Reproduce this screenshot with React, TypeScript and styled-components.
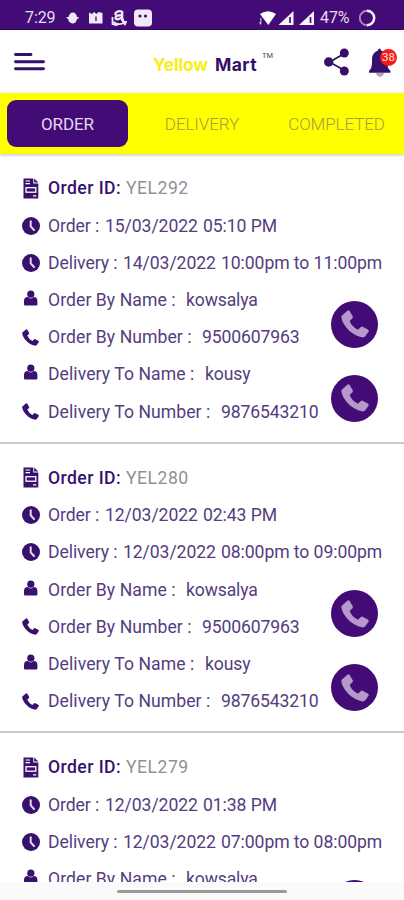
import React from "react";
import styled, { createGlobalStyle } from "styled-components";

const purple = "#430b76";
const ink = "#38106e";

const Global = createGlobalStyle`
  * { box-sizing: border-box; }
  html, body { margin: 0; padding: 0; background: #fff; }
  body { font-family: Roboto, "Liberation Sans", sans-serif; color: ${ink}; }
`;

const Screen = styled.div`
  width: 404px;
  height: 900px;
  display: flex;
  flex-direction: column;
  overflow: hidden;
  background: #fff;
`;

const StatusBar = styled.header`
  flex: none;
  height: 30px;
  padding: 6px 28px 0 25px;
  display: flex;
  align-items: center;
  justify-content: space-between;
  background: ${purple};
  border-bottom: 1px solid #2d0b62;
`;

const StatusText = styled.span<{ $w: number }>`
  width: ${(p) => p.$w}px;
  font-size: 16px;
  line-height: 20px;
  letter-spacing: -0.1px;
  color: #e9def2;
  white-space: nowrap;
`;

const StatusGroup = styled.div<{ $gap: number }>`
  display: flex;
  align-items: center;
  gap: ${(p) => p.$gap}px;
  svg { display: block; }
`;

const AppBar = styled.div`
  flex: none;
  height: 63px;
  display: grid;
  grid-template-columns: 153px 171px 27px 1fr;
  align-items: center;
  svg { display: block; }
`;

const MenuButton = styled.div`
  padding-left: 14px;
`;

const Brand = styled.div`
  display: flex;
  align-items: flex-start;
  height: 26px;
  margin-top: 4px;
  font-family: Inter, sans-serif;
  font-weight: 700;
  font-size: 17.5px;
  line-height: 27px;
  white-space: nowrap;
`;

const BrandPart = styled.span<{ $color: string; $w: number; $ls: number }>`
  width: ${(p) => p.$w}px;
  color: ${(p) => p.$color};
  letter-spacing: ${(p) => p.$ls}px;
`;

const Trademark = styled.sup`
  font: 400 7.5px/10px Roboto, sans-serif;
  color: #4d3c69;
`;

const BellWrap = styled.div`
  position: relative;
  width: 32px;
  height: 32px;
  margin-left: 14px;
`;

const Badge = styled.span`
  position: absolute;
  left: 15px;
  top: 3px;
  width: 17px;
  height: 17px;
  border-radius: 50%;
  background: #f51b17;
  color: #ffe3e3;
  font-size: 11.5px;
  line-height: 17px;
  text-align: center;
`;

const Tabs = styled.nav`
  flex: none;
  height: 61px;
  display: grid;
  grid-template-columns: 135px 134px 135px;
  align-items: center;
  background: #ffff00;
  box-shadow: 0 1px 3px rgba(70, 70, 90, 0.35);
`;

const Tab = styled.div<{ $active?: boolean }>`
  height: 47px;
  margin: -1px 7px 0;
  border-radius: 9px;
  display: flex;
  align-items: center;
  justify-content: center;
  padding-top: 2px;
  font-size: 17px;
  letter-spacing: -0.1px;
  white-space: nowrap;
  font-weight: ${(p) => (p.$active ? 400 : 300)};
  background: ${(p) => (p.$active ? purple : "transparent")};
  color: ${(p) => (p.$active ? "#e5d8ee" : "#a89a48")};
`;

const List = styled.main`
  flex: 1;
  min-height: 0;
  overflow: hidden;
`;

const Card = styled.section`
  height: 289.6px;
  padding: 15px 0 0 22px;
  border-bottom: 2px solid #c9c9cb;
`;

const Row = styled.div<{ $head?: boolean }>`
  height: ${(p) => (p.$head ? 38 : 37.2)}px;
  display: flex;
  align-items: center;
  font-size: 17.6px;
  line-height: 22px;
  white-space: pre;
`;

const IconSlot = styled.span`
  width: 26px;
  flex: none;
  display: flex;
  svg { display: block; }
`;

const Cell = styled.span<{ $w?: number; $bold?: boolean; $muted?: boolean; $ls?: number }>`
  flex: none;
  width: ${(p) => (p.$w ? p.$w + "px" : "auto")};
  font-weight: ${(p) => (p.$bold ? 500 : 400)};
  letter-spacing: ${(p) => p.$ls ?? -0.08}px;
  color: ${(p) => (p.$muted ? "#929096" : p.$bold ? ink : "#543d7e")};
`;

const Contacts = styled.div`
  display: flex;
`;

const ContactRows = styled.div`
  width: 309px;
`;

const Calls = styled.div`
  display: flex;
  flex-direction: column;
  gap: 27px;
  padding-top: 19.4px;
`;

const CallButton = styled.div`
  width: 47px;
  height: 47px;
  border-radius: 50%;
  background: ${purple};
  display: flex;
  align-items: center;
  justify-content: center;
`;

const NavBar = styled.footer`
  flex: none;
  height: 18px;
  display: flex;
  justify-content: center;
  background: #fafafa;
  padding-top: 8px;
`;

const Handle = styled.div`
  width: 170px;
  height: 3px;
  border-radius: 2px;
  background: #999;
`;

const ClockIcon = () => (
  <svg width="18" height="18" viewBox="0 0 18 18">
    <circle cx="9" cy="9" r="9" fill={ink} />
    <path d="M8.7 4.2V9.4L12 13" fill="none" stroke="#e3dced" strokeWidth="2" strokeLinecap="round" />
  </svg>
);

const PersonIcon = () => (
  <svg width="18" height="20" viewBox="0 0 18 20">
    <circle cx="8.8" cy="4.2" r="3.6" fill={ink} />
    <path d="M2 14.5V11Q2 7.2 5.8 7.1Q8.8 10 11.8 7.1Q15.4 7.2 15.4 11V14.5Q15.4 15.6 14.3 15.6H3.2Q2 15.6 2 14.5Z" fill={ink} />
  </svg>
);

const HandsetIcon = ({ size, color }: { size: number; color: string }) => (
  <svg width={size} height={size} viewBox="0 0 28 28">
    <path
      d="M1 5.5L6.4.7Q7.7-.2 8.8 1.3L11.6 6Q12.4 7.4 11.2 8.5L8.7 10.9Q10.8 16.6 17 19.7L19.6 17.2Q20.7 16.2 22.1 16.9L26.8 19.4Q28.3 20.3 27.5 21.7L24.3 26.3Q23.2 27.8 20.8 27.3C11 25.2 2 16 .4 7.7Q.1 6.3 1 5.5Z"
      fill={color}
    />
  </svg>
);

const ReceiptIcon = () => (
  <svg width="18" height="21" viewBox="0 0 18 21">
    <path d="M1.5.5H11.3V5.5H16.3V20.5H1.5Z" fill={ink} />
    <path d="M12.2.5L16.3 4.6H12.2Z" fill={ink} />
    <path d="M3.5 3H8M3.5 5.6H8M11 17.8H14.3" stroke="#fff" strokeWidth="1.2" />
    <rect x="4" y="9.7" width="9.8" height="4.5" fill={ink} stroke="#fff" strokeWidth="1.3" />
  </svg>
);

const LeftStatusIcons = () => (
  <svg width="88" height="20" viewBox="0 0 88 20" fill="#f1e9f7">
    <path d="M1 9H3.5Q4.5 4.5 8 4.5Q11 4.5 12 9L14 9.6V10.3L12 11Q11 15.5 7.5 15.5Q4 15 3 11Z" />
    <path d="M24 4.5L27 6L29 4L31.5 6L33.5 4L37.5 5V15.5H24Z" />
    <path d="M31 8.5V13" stroke={purple} strokeWidth="1.3" />
    <path d="M50.5 7.2V5Q54 1.8 57.2 4V11.8H59M57 7.3Q50.5 6.8 50.5 10Q51.5 12.8 57 9.6" fill="none" stroke="#f1e9f7" strokeWidth="2.3" />
    <path d="M47.5 9V16L52.5 17.5M48.5 14Q53.5 18 60 14.5M57 13.5L61 14L59.5 17.3" fill="none" stroke="#f1e9f7" strokeWidth="1.8" />
    <rect x="69" y="1.5" width="18" height="17" rx="4" />
    <circle cx="75" cy="8" r="1.6" fill={purple} />
    <circle cx="80.5" cy="8" r="1.6" fill={purple} />
  </svg>
);

const SignalIcons = () => (
  <svg width="56" height="18" viewBox="0 0 56 18">
    <path d="M1 5Q9-.5 17 5L9.3 16Z" fill="#fff" />
    <path d="M1.8 9V15M.5 13.5L1.8 15.5" fill="none" stroke="#c9b8d9" strokeWidth="1.2" />
    <path d="M34.5 2V16H19.5ZM55 2V16H40Z" fill="#f6f1fa" />
    <path d="M31 8V14M51.5 8V14" stroke={purple} strokeWidth="1.7" />
  </svg>
);

const BatteryRing = () => (
  <svg width="18" height="18" viewBox="0 0 18 18" fill="none">
    <circle cx="9" cy="9" r="7.2" stroke="#a38abb" strokeWidth="2" />
    <path d="M9 1.8A7.2 7.2 0 0 1 9 16.2" stroke="#f5eff9" strokeWidth="2.5" />
  </svg>
);

const MenuIcon = () => (
  <svg width="31" height="20" viewBox="0 0 31 20">
    <path d="M1.5 2.5H17M1.5 9.7H29.5M1.5 16.7H29.5" stroke="#35106b" strokeWidth="2.9" strokeLinecap="round" />
  </svg>
);

const ShareIcon = () => (
  <svg width="27" height="28" viewBox="0 0 27 28">
    <path d="M21.5 5L5.5 14L21.5 23" fill="none" stroke="#35106b" strokeWidth="1.8" />
    <circle cx="20.3" cy="5" r="4.5" fill="#35106b" />
    <circle cx="4.7" cy="14" r="4.7" fill="#35106b" />
    <circle cx="20.3" cy="23" r="4.5" fill="#35106b" />
  </svg>
);

const BellIcon = () => (
  <svg width="32" height="32" viewBox="0 0 32 32">
    <path d="M11 27H19Q18.3 30.7 15 30.7Q11.7 30.7 11 27Z" fill="#b1a5bd" />
    <path d="M13 4.5Q13 2.5 14.5 2.5Q16 2.5 16 4.5Q22 6.5 22.5 13V20Q23 22.5 25.5 25V26.8H4V25Q7 22 7 18V12.5Q7.5 6.5 13 4.5Z" fill="#35106b" />
  </svg>
);

type Order = { id: string; placed: string; placedAt: string; due: string; slot: string };

const orders: Order[] = [
  { id: "YEL292", placed: "15/03/2022", placedAt: "05:10 PM", due: "14/03/2022", slot: "10:00pm to 11:00pm" },
  { id: "YEL280", placed: "12/03/2022", placedAt: "02:43 PM", due: "12/03/2022", slot: "08:00pm to 09:00pm" },
  { id: "YEL279", placed: "12/03/2022", placedAt: "01:38 PM", due: "12/03/2022", slot: "07:00pm to 08:00pm" },
];

type ContactProps = { label: string; value: string; width: number; phone?: boolean };

const ContactRow = ({ label, value, width, phone }: ContactProps) => (
  <Row>
    <IconSlot>{phone ? <HandsetIcon size={17} color={ink} /> : <PersonIcon />}</IconSlot>
    <Cell $w={width} $ls={0.06}>{label} :</Cell>
    <Cell $ls={-0.15}>{value}</Cell>
  </Row>
);

const OrderCard = ({ order }: { order: Order }) => (
  <Card>
    <Row $head>
      <IconSlot><ReceiptIcon /></IconSlot>
      <Cell $bold $w={78} $ls={0.42}>Order ID:</Cell>
      <Cell $muted $ls={0.5}>{order.id}</Cell>
    </Row>
    <Row>
      <IconSlot><ClockIcon /></IconSlot>
      <Cell $w={57}>Order :</Cell>
      <Cell $w={98}>{order.placed}</Cell>
      <Cell>{order.placedAt}</Cell>
    </Row>
    <Row>
      <IconSlot><ClockIcon /></IconSlot>
      <Cell $w={75}>Delivery :</Cell>
      <Cell $w={98}>{order.due}</Cell>
      <Cell>{order.slot}</Cell>
    </Row>
    <Contacts>
      <ContactRows>
        <ContactRow label="Order By Name" value="kowsalya" width={138} />
        <ContactRow label="Order By Number" value="9500607963" width={154} phone />
        <ContactRow label="Delivery To Name" value="kousy" width={157} />
        <ContactRow label="Delivery To Number" value="9876543210" width={173} phone />
      </ContactRows>
      <Calls>
        <CallButton><HandsetIcon size={28} color="#b698cc" /></CallButton>
        <CallButton><HandsetIcon size={28} color="#b698cc" /></CallButton>
      </Calls>
    </Contacts>
  </Card>
);

export default function App() {
  return (
    <>
      <Global />
      <Screen>
        <StatusBar>
          <StatusGroup $gap={9}>
            <StatusText $w={31}>7:29</StatusText>
            <LeftStatusIcons />
          </StatusGroup>
          <StatusGroup $gap={5}>
            <SignalIcons />
            <StatusText $w={33}>47%</StatusText>
            <BatteryRing />
          </StatusGroup>
        </StatusBar>
        <AppBar>
          <MenuButton><MenuIcon /></MenuButton>
          <Brand>
            <BrandPart $color="#f8ee1c" $w={62} $ls={-0.2}>Yellow</BrandPart>
            <BrandPart $color="#35106b" $w={47} $ls={0.4}>Mart</BrandPart>
            <Trademark>TM</Trademark>
          </Brand>
          <ShareIcon />
          <BellWrap>
            <BellIcon />
            <Badge>38</Badge>
          </BellWrap>
        </AppBar>
        <Tabs>
          <Tab $active>ORDER</Tab>
          <Tab>DELIVERY</Tab>
          <Tab>COMPLETED</Tab>
        </Tabs>
        <List>
          {orders.map((order) => (
            <OrderCard key={order.id} order={order} />
          ))}
        </List>
        <NavBar><Handle /></NavBar>
      </Screen>
    </>
  );
}
